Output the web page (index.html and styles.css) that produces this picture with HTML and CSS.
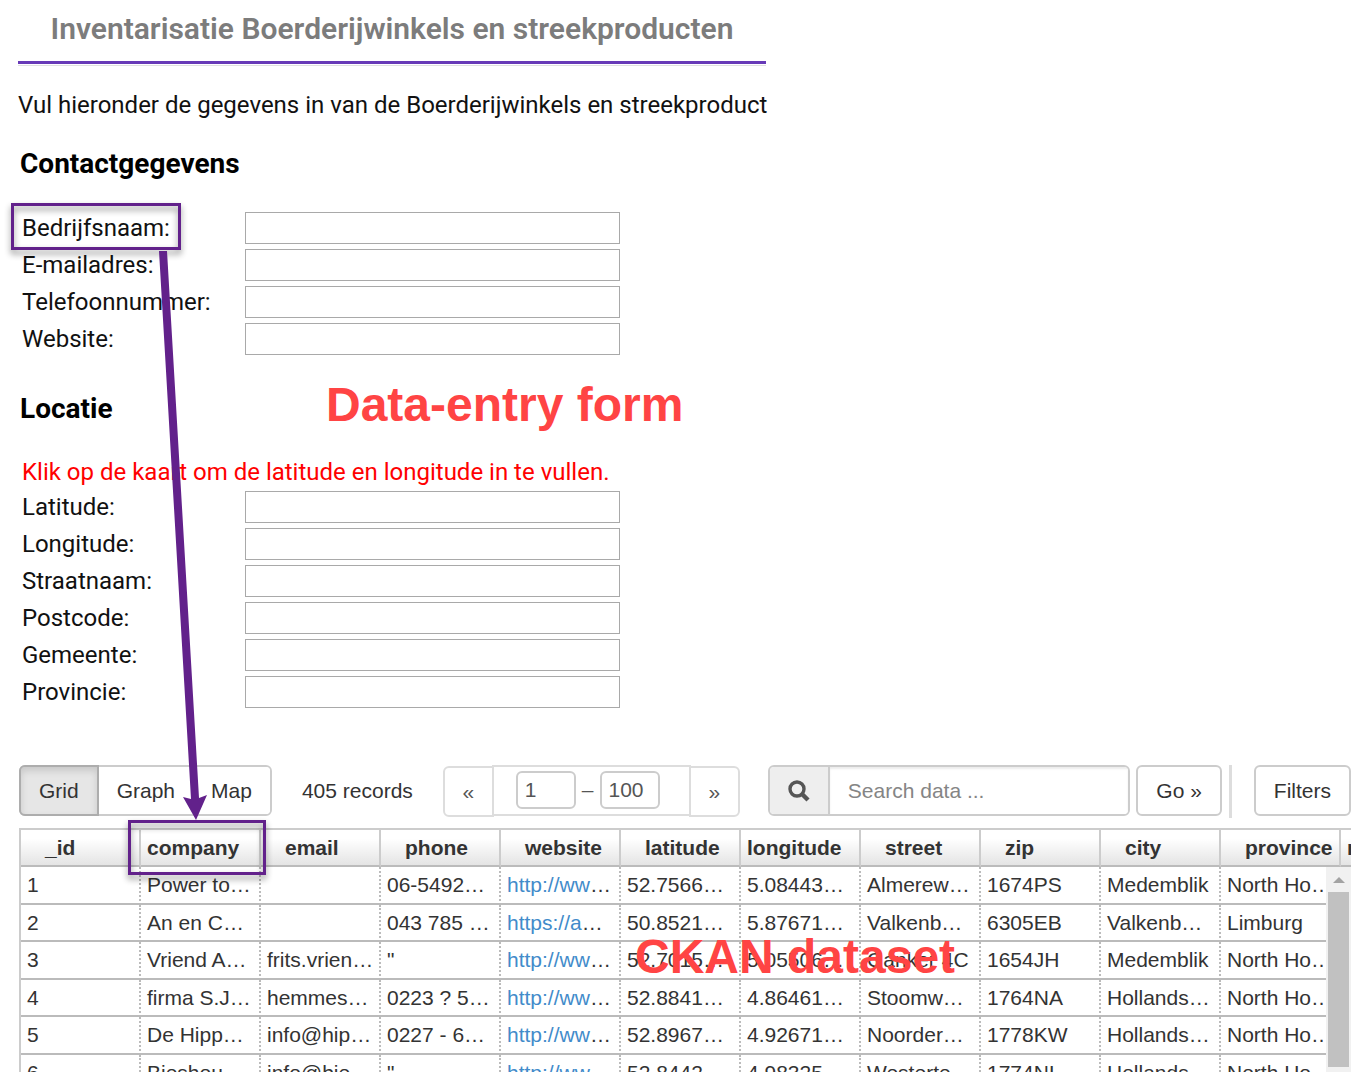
FILE: index.html
```html
<!DOCTYPE html>
<html lang="nl">
<head>
<meta charset="utf-8">
<meta name="viewport" content="width=device-width, initial-scale=1">
<title>Inventarisatie Boerderijwinkels en streekproducten</title>
<link rel="stylesheet" href="styles.css">
</head>
<body>
<main class="page">
  <form class="entry">
    <h1 class="entry-title">Inventarisatie Boerderijwinkels en streekproducten</h1>
    <p class="intro">Vul hieronder de gegevens in van de Boerderijwinkels en streekproduct</p>
    <h2 class="section-title">Contactgegevens</h2>
    <div class="fields">
      <label for="bedrijf">Bedrijfsnaam:</label><input id="bedrijf" type="text">
      <label for="mail">E-mailadres:</label><input id="mail" type="text">
      <label for="tel">Telefoonnummer:</label><input id="tel" type="text">
      <label for="web">Website:</label><input id="web" type="text">
    </div>
    <h2 class="section-title section-title-low">Locatie</h2>
    <p class="hint">Klik op de kaart om de latitude en longitude in te vullen.</p>
    <div class="fields">
      <label for="lat">Latitude:</label><input id="lat" type="text">
      <label for="lon">Longitude:</label><input id="lon" type="text">
      <label for="straat">Straatnaam:</label><input id="straat" type="text">
      <label for="post">Postcode:</label><input id="post" type="text">
      <label for="gem">Gemeente:</label><input id="gem" type="text">
      <label for="prov">Provincie:</label><input id="prov" type="text">
    </div>
  </form>

  <section class="dataset">
    <div class="toolbar">
      <div class="views">
        <button type="button" class="active">Grid</button>
        <button type="button">Graph</button>
        <button type="button">Map</button>
      </div>
      <span class="count">405 records</span>
      <div class="pager">
        <a class="pager-end pager-prev" href="#">«</a>
        <span class="pager-range"><input type="text" value="1" aria-label="From"><span>–</span><input type="text" value="100" aria-label="To"></span>
        <a class="pager-end pager-next" href="#">»</a>
      </div>
      <div class="search">
        <span class="search-icon"><svg width="22" height="22" viewBox="0 0 22 22"><circle cx="9" cy="9" r="7" fill="none" stroke="#555" stroke-width="3.4"/><path d="M14 14l6 6" stroke="#555" stroke-width="4.4"/></svg></span>
        <input type="text" placeholder="Search data ..." aria-label="Search data">
      </div>
      <button type="button" class="btn">Go »</button>
      <span class="divider"></span>
      <button type="button" class="btn">Filters</button>
    </div>

    <div class="grid">
      <table>
        <thead>
          <tr><th>_id</th><th class="wide">company</th><th>email</th><th>phone</th><th>website</th><th>latitude</th><th class="wide">longitude</th><th>street</th><th>zip</th><th>city</th><th>province</th><th class="wide">n</th></tr>
        </thead>
        <tbody>
          <tr><td>1</td><td>Power to…</td><td></td><td>06-5492…</td><td><a href="#">http://ww</a>…</td><td>52.7566…</td><td>5.08443…</td><td>Almerew…</td><td>1674PS</td><td>Medemblik</td><td>North Ho…</td><td></td></tr>
          <tr><td>2</td><td>An en C…</td><td></td><td>043 785 …</td><td><a href="#">https://a</a>…</td><td>50.8521…</td><td>5.87671…</td><td>Valkenb…</td><td>6305EB</td><td>Valkenb…</td><td>Limburg</td><td></td></tr>
          <tr><td>3</td><td>Vriend A…</td><td>frits.vrien…</td><td>"</td><td><a href="#">http://ww</a>…</td><td>52.7015…</td><td>5.05506…</td><td>Ganker 4C</td><td>1654JH</td><td>Medemblik</td><td>North Ho…</td><td></td></tr>
          <tr><td>4</td><td>firma S.J…</td><td>hemmes…</td><td>0223 ? 5…</td><td><a href="#">http://ww</a>…</td><td>52.8841…</td><td>4.86461…</td><td>Stoomw…</td><td>1764NA</td><td>Hollands…</td><td>North Ho…</td><td></td></tr>
          <tr><td>5</td><td>De Hipp…</td><td>info@hip…</td><td>0227 - 6…</td><td><a href="#">http://ww</a>…</td><td>52.8967…</td><td>4.92671…</td><td>Noorder…</td><td>1778KW</td><td>Hollands…</td><td>North Ho…</td><td></td></tr>
          <tr><td>6</td><td>Bieshou…</td><td>info@bie…</td><td>"</td><td><a href="#">http://ww</a>…</td><td>52.8442…</td><td>4.98325…</td><td>Westerte…</td><td>1774NL</td><td>Hollands…</td><td>North Ho…</td><td></td></tr>
        </tbody>
      </table>
      <div class="scrollbar"><svg width="12" height="6" viewBox="0 0 12 6"><path d="M0 6L6 0l6 6z" fill="#a3a3a3"/></svg><span class="thumb"></span></div>
    </div>
  </section>

  <div class="ring ring-field"></div>
  <div class="ring ring-column"></div>
  <svg class="arrow" width="60" height="572" viewBox="0 0 60 572"><path d="M9 1L17 1L49 548L57 545L46 570L33 547L41 549Z" fill="#62218b"/></svg>
  <div class="note note-form">Data-entry form</div>
  <div class="note note-data">CKAN dataset</div>
</main>
</body>
</html>
```
FILE: styles.css
```css
* { box-sizing: border-box; }
body { margin: 0; background: #fff; }
.page {
  position: relative;
  display: flex;
  flex-direction: column;
  height: 100vh;
  overflow: hidden;
}

/* Data-entry form */
.entry {
  flex: none;
  max-width: 766px;
  padding-left: 18px;
  font: 24px/32px Roboto, sans-serif;
  color: #111;
}
.entry-title {
  margin: 0;
  padding: 13px 0 16px;
  border-bottom: 3px solid #673ab7;
  box-shadow: 0 1px 0 #fff, 0 2px 0 #e0e0e0;
  font-size: 30px;
  font-weight: 600;
  line-height: 32px;
  text-align: center;
  white-space: nowrap;
  color: #7c7c7c;
}
.intro { margin: 25px 0 0; white-space: nowrap; }
.section-title {
  margin: 27px 0 32px 2px;
  font-size: 28px;
  font-weight: 700;
  line-height: 32px;
  color: #000;
}
.section-title-low { margin: 38px 0 31px 2px; }
.hint { margin: 0 0 3px 4px; color: #f00; }
.fields {
  display: grid;
  grid-template-columns: 223px 375px;
  row-gap: 5px;
  padding-left: 4px;
}
.fields input {
  height: 32px;
  border: 1px solid #a9a9a9;
  padding: 0 6px;
  font: inherit;
}

/* Dataset viewer */
.dataset {
  flex: 1;
  display: flex;
  flex-direction: column;
  min-height: 0;
  margin-top: 57px;
  padding: 0 10px 0 19px;
  font: 21px/30px "Liberation Sans", Arial, sans-serif;
  color: #333;
}
.toolbar { display: flex; height: 51px; flex: none; }
.toolbar button, .toolbar input { font: inherit; color: inherit; }
.toolbar button { margin: 0; padding: 0 18px; background: #fff; white-space: nowrap; }
.views { display: flex; border: 2px solid #ccc; border-radius: 6px; }
.views button { border: 0; border-radius: 4px; }
.views .active {
  margin: -2px 0 -2px -2px;
  border: 2px solid #adadad;
  border-radius: 6px 0 0 6px;
  background: #e6e6e6;
  box-shadow: inset 0 4px 7px rgba(0, 0, 0, .13);
}
.count { margin: 11px 30px 0; white-space: nowrap; }
.pager { display: flex; color: #555; }
.pager-end {
  width: 51px;
  height: 51px;
  margin-top: 1px;
  border: 2px solid #ddd;
  line-height: 48px;
  text-align: center;
  color: #555;
  text-decoration: none;
}
.pager-prev { border-radius: 6px 0 0 6px; }
.pager-next { border-radius: 0 6px 6px 0; }
.pager-range {
  display: flex;
  gap: 6px;
  width: 199px;
  margin: 0 -2px;
  padding: 4px 22px;
  border: 2px solid #ddd;
  line-height: 38px;
}
.pager-range input {
  width: 60px;
  height: 38px;
  padding: 0 7px;
  border: 2px solid #ccc;
  border-radius: 6px;
}
.pager .pager-range input { color: #555; }
.search {
  flex: 1;
  display: flex;
  min-width: 0;
  margin: 0 6px 0 28px;
  border: 2px solid #ccc;
  border-radius: 6px;
  overflow: hidden;
}
.search-icon {
  display: flex;
  align-items: center;
  justify-content: center;
  width: 60px;
  border-right: 2px solid #ccc;
  background: #eee;
}
.search input {
  flex: 1;
  min-width: 0;
  padding: 0 18px;
  border: 0;
  box-shadow: inset 0 2px 2px rgba(0, 0, 0, .08);
}
.search input::placeholder { color: #858585; opacity: 1; }
.btn { border: 2px solid #ccc; border-radius: 6px; }
.divider { width: 3px; height: 53px; margin: 0 22px 0 7px; background: #ddd; }

.grid {
  position: relative;
  flex: 1;
  min-height: 0;
  margin-top: 12px;
  border-top: 2px solid #ccc;
  border-left: 2px solid #ccc;
  overflow: hidden;
}
.grid table {
  width: 1440px;
  table-layout: fixed;
  border-spacing: 0;
}
.grid th {
  height: 37px;
  padding: 0 0 0 24px;
  border-right: 2px solid #ccc;
  border-bottom: 2px solid #bbb;
  background: linear-gradient(#fff 25%, #e4e4e4);
  line-height: 24px;
  text-align: left;
}
.grid th.wide { padding-left: 6px; }
.grid td {
  height: 37px;
  padding: 0 0 0 6px;
  border-right: 2px dotted #bbb;
  border-bottom: 2px solid #bbb;
  line-height: 24px;
  white-space: nowrap;
  overflow: hidden;
}
.grid tbody tr:nth-child(odd) td { height: 38px; }
.grid td a { color: #428bca; text-decoration: none; }
.scrollbar {
  position: absolute;
  top: 37px;
  right: 0;
  bottom: 0;
  display: flex;
  flex-direction: column;
  align-items: center;
  gap: 9px;
  width: 25px;
  padding: 10px 2px 5px;
  background: #f1f1f1;
}
.thumb { flex: 1; width: 21px; background: #c1c1c1; }

/* Annotations drawn over the page */
.ring {
  position: absolute;
  border: 3px solid #62218b;
  filter: drop-shadow(0 4px 3px rgba(0, 0, 0, .45));
}
.ring-field { left: 11px; top: 203px; width: 170px; height: 47px; }
.ring-column { left: 128px; top: 820px; width: 138px; height: 55px; }
.arrow { position: absolute; left: 150px; top: 250px; }
.note {
  position: absolute;
  font: bold 48px/56px "Liberation Sans", Arial, sans-serif;
  color: #ff4444;
  white-space: nowrap;
}
.note-form { left: 326px; top: 377px; }
.note-data { left: 635px; top: 929px; }
```
